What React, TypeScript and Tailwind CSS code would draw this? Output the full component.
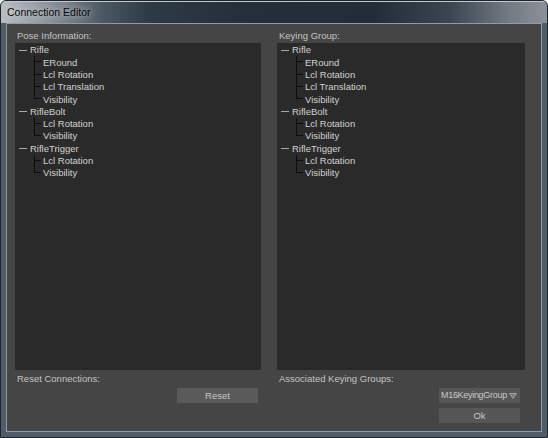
import React from 'react';

type Node = { name: string; children: string[] };

const TREE: Node[] = [
  { name: 'Rifle', children: ['ERound', 'Lcl Rotation', 'Lcl Translation', 'Visibility'] },
  { name: 'RifleBolt', children: ['Lcl Rotation', 'Visibility'] },
  { name: 'RifleTrigger', children: ['Lcl Rotation', 'Visibility'] },
];

function Tree() {
  return (
    <div className="pt-[1px]">
      {TREE.map((node, i) => (
        <div key={i}>
          <div className="flex h-[12.3px] items-center">
            <span className="ml-[4px] h-px w-[8px] bg-[#a8a8a8]" />
            <span className="ml-[3px] text-[#d2d2d2]">{node.name}</span>
          </div>
          {node.children.map((child, j) => {
            const last = j === node.children.length - 1;
            return (
              <div key={j} className="flex h-[12.3px] items-center">
                {/* tree connector */}
                <div className="ml-[19px] flex h-full w-[7px] flex-col">
                  <div className="h-1/2 border-b border-l border-[#0c0c0c]" />
                  <div className={`h-1/2 border-l ${last ? 'border-transparent' : 'border-[#0c0c0c]'}`} />
                </div>
                <span className="ml-[2px] text-[#d2d2d2]">{child}</span>
              </div>
            );
          })}
        </div>
      ))}
    </div>
  );
}

export default function App() {
  return (
    <div
      className="flex h-[438px] w-[548px] flex-col overflow-hidden rounded-t-[6px] border border-[#1b232b] bg-[#4f5b66] text-[9.5px] leading-none"
      style={{ fontFamily: '"Liberation Sans", Arial, sans-serif' }}
    >
      {/* Title bar */}
      <div className="flex h-[22px] shrink-0 items-center border-t border-[#c3c9ce] bg-[linear-gradient(90deg,#b9bec3_0%,#8a9299_9%,#4a5660_19%,#2e3a44_27%,#242f39_45%,#222d37_68%,#3a4550_82%,#727a82_93%,#8b9197_100%)] pl-[6px]">
        <span className="text-[10.5px] text-[#0a0a0a] [text-shadow:0_0_6px_rgba(230,235,240,0.9)]">Connection Editor</span>
      </div>

      {/* Frame + client area */}
      <div className="flex flex-1 flex-col px-[5px] pb-[5px]">
        <div className="flex flex-1 gap-[16px] border border-[#8e9ca8] bg-[#454545] pl-[8px] pt-[4px]">
          {/* Left column */}
          <div className="flex w-[246px] flex-col">
            <div className="flex h-[15px] items-center pl-[2px] text-[#c4c4c4]">Pose Information:</div>
            <div className="h-[327px] bg-[#2a2a2a]">
              <Tree />
            </div>
            <div className="flex h-[17px] items-center pl-[2px] text-[#c4c4c4]">Reset Connections:</div>
            <div className="flex justify-end pr-[3px] pt-[1px]">
              <button className="flex h-[15px] w-[81px] items-center justify-center bg-[#5a5a5a] text-[#c8c8c8]">Reset</button>
            </div>
          </div>

          {/* Right column */}
          <div className="flex w-[248px] flex-col">
            <div className="flex h-[15px] items-center pl-[2px] text-[#c4c4c4]">Keying Group:</div>
            <div className="h-[327px] bg-[#2a2a2a]">
              <Tree />
            </div>
            <div className="flex h-[17px] items-center pl-[2px] text-[#c4c4c4]">Associated Keying Groups:</div>
            <div className="flex flex-col items-end gap-[5px] pr-[5px] pt-[1px]">
              <div className="flex h-[15px] w-[81px] items-center overflow-hidden bg-[#565656] pl-[2px] text-[#c8c8c8]">
                <span className="text-[9px] tracking-[-0.3px] whitespace-nowrap">M16KeyingGroup</span>
                <svg className="ml-[2px] shrink-0" width="8" height="6" viewBox="0 0 8 6">
                  <path d="M0.5 0.5 H7.5 L4 5.5 Z" fill="#7a7a7a" stroke="#b0b0b0" strokeWidth="0.8" />
                </svg>
              </div>
              <button className="flex h-[15px] w-[81px] items-center justify-center bg-[#565656] text-[#c8c8c8]">Ok</button>
            </div>
          </div>
        </div>
      </div>
    </div>
  );
}
